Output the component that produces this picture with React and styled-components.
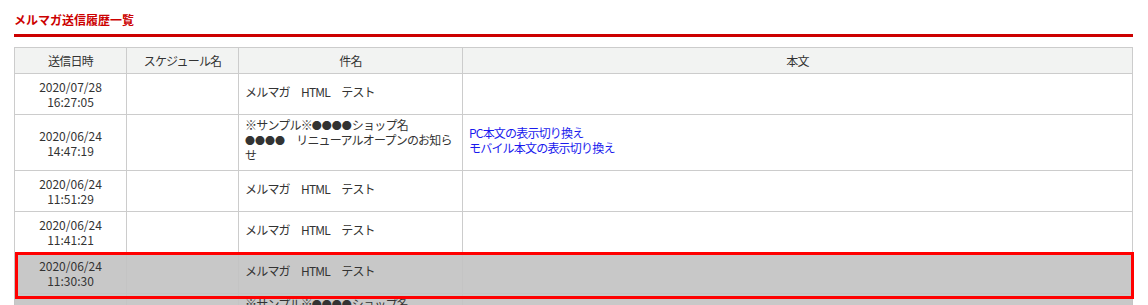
import React from 'react';
import styled, { createGlobalStyle } from 'styled-components';

const GlobalStyle = createGlobalStyle`
  body {
    margin: 0;
    background: #fff;
    font-family: "Noto Sans CJK JP", "Noto Sans", sans-serif;
    color: #333;
  }
`;

const Page = styled.div`
  padding: 12px 15px 0 14px;
`;

// 見出し + 赤い下線
const Heading = styled.h2`
  margin: 0 0 10px;
  padding-bottom: 6px;
  border-bottom: 3px solid #cc0000;
  color: #cc0000;
  font-size: 12px;
  font-weight: bold;
  line-height: 16px;
`;

const TableWrap = styled.div`
  position: relative;
`;

const Table = styled.table`
  width: 100%;
  border-collapse: collapse;
  table-layout: fixed;
  font-size: 12px;
  line-height: 15px;
`;

const Th = styled.th`
  background: #f2f3f2;
  border: 1px solid #cccccc;
  padding: 5px 6px;
  font-weight: normal;
  color: #333;
  letter-spacing: -0.8px;
`;

const Row = styled.tr`
  background: ${(p) => (p.$dimmed ? '#c8c8c8' : '#fff')};

  td {
    border: 1px solid ${(p) => (p.$dimmed ? '#c4c4c4' : '#cccccc')};
  }
`;

const Td = styled.td`
  padding: 5px 6px;
  vertical-align: middle;
  text-align: center;
`;

// 日本語テキストのセルは少し上寄せ・字間を詰める
const TextTd = styled.td`
  padding: 2px 6px 8px;
  vertical-align: middle;
  text-align: left;
  letter-spacing: -0.8px;
`;

const Line = styled.span`
  display: block;
  white-space: nowrap;
`;

// 伏せ字の丸は本文より小さめ
const Dot = styled.span`
  font-size: 10px;
  line-height: 10px;
  letter-spacing: 0;
`;

const ToggleLink = styled.a`
  display: block;
  color: #1a1aee;
  text-decoration: none;
  cursor: pointer;
`;

// 選択中の行を囲む赤枠
const Focus = styled.div`
  position: absolute;
  left: 1px;
  right: -1px;
  top: 205px;
  height: 47px;
  border: 3px solid #ff0000;
  box-sizing: border-box;
  pointer-events: none;
`;

const renderLine = (text) =>
  text.split(/(●+)/).map((part, k) =>
    part.startsWith('●') ? <Dot key={k}>{part}</Dot> : part
  );

const noticeSubject = ['※サンプル※●●●●ショップ名', '●●●●　リニューアルオープンのお知ら', 'せ'];

const rows = [
  { date: '2020/07/28', time: '16:27:05', subject: ['メルマガ　HTML　テスト'] },
  { date: '2020/06/24', time: '14:47:19', subject: noticeSubject, toggles: true },
  { date: '2020/06/24', time: '11:51:29', subject: ['メルマガ　HTML　テスト'] },
  { date: '2020/06/24', time: '11:41:21', subject: ['メルマガ　HTML　テスト'] },
  { date: '2020/06/24', time: '11:30:30', subject: ['メルマガ　HTML　テスト'], dimmed: true },
  { date: '2020/06/24', time: '11:20:41', subject: noticeSubject, dimmed: true },
];

export default function App() {
  return (
    <>
      <GlobalStyle />
      <Page>
        <Heading>メルマガ送信履歴一覧</Heading>
        <TableWrap>
          <Table>
            <colgroup>
              <col style={{ width: 112 }} />
              <col style={{ width: 112 }} />
              <col style={{ width: 224 }} />
              <col />
            </colgroup>
            <thead>
              <tr>
                <Th>送信日時</Th>
                <Th>スケジュール名</Th>
                <Th>件名</Th>
                <Th>本文</Th>
              </tr>
            </thead>
            <tbody>
              {rows.map((r, i) => (
                <Row key={i} $dimmed={r.dimmed}>
                  <Td>
                    {r.date}
                    <br />
                    {r.time}
                  </Td>
                  <Td />
                  <TextTd>
                    {r.subject.map((line, j) => (
                      <Line key={j}>{renderLine(line)}</Line>
                    ))}
                  </TextTd>
                  <TextTd>
                    {r.toggles && (
                      <>
                        <ToggleLink>PC本文の表示切り換え</ToggleLink>
                        <ToggleLink>モバイル本文の表示切り換え</ToggleLink>
                      </>
                    )}
                  </TextTd>
                </Row>
              ))}
            </tbody>
          </Table>
          <Focus />
        </TableWrap>
      </Page>
    </>
  );
}
